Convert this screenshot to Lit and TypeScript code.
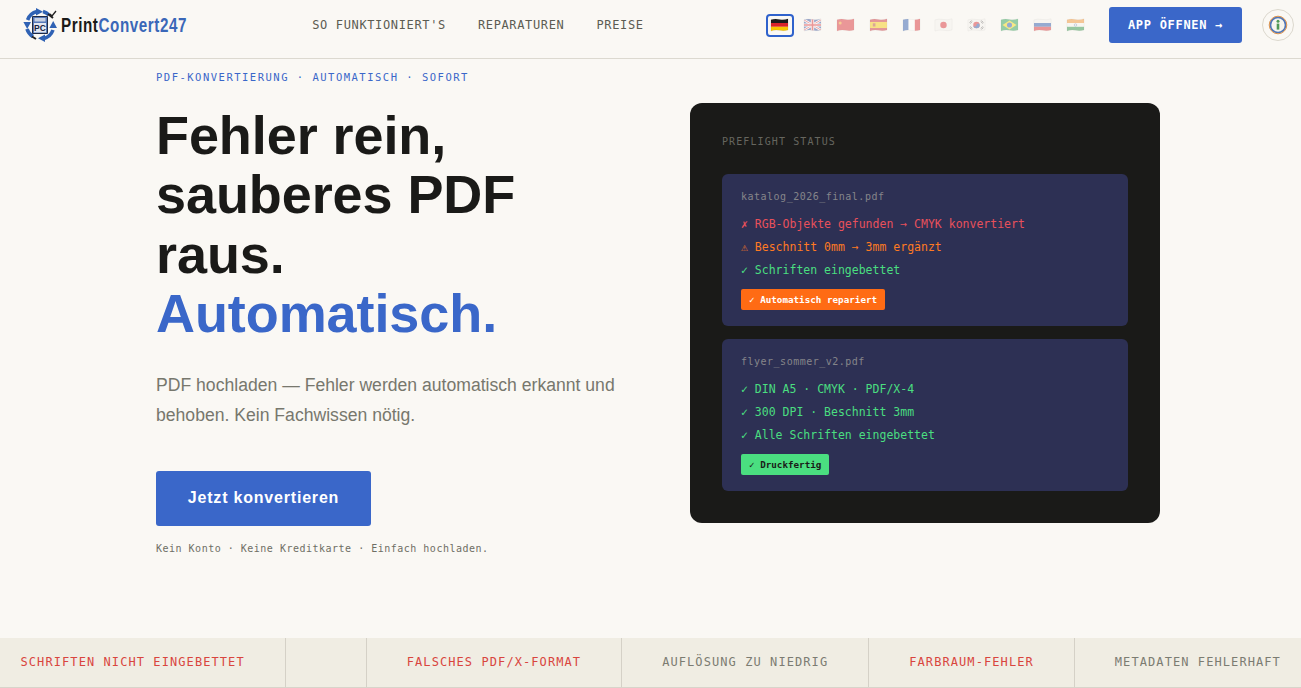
import { LitElement, html, css, svg } from "lit";
import { customElement } from "lit/decorators.js";

const WAVE = "M1 1.6Q5 .2 10 1.2T19 .4V12.2Q15 13.6 10 12.6T1 13.4Z";
const flagArt: Record<string, unknown> = {
  de: svg`<rect width="20" height="4.9" y="0" fill="#1c1c1c"/><rect width="20" height="4" y="4.9" fill="#d8232a"/><rect width="20" height="6" y="8.9" fill="#f7c600"/>`,
  gb: svg`<rect width="20" height="14" fill="#2b4a9b"/><path d="M0 1L20 13M20 1L0 13" stroke="#fff" stroke-width="2.6"/><path d="M0 1L20 13M20 1L0 13" stroke="#d8232a" stroke-width=".9"/><path d="M10 0V14M0 7H20" stroke="#fff" stroke-width="3.4"/><path d="M10 0V14M0 7H20" stroke="#d8232a" stroke-width="1.8"/>`,
  cn: svg`<rect width="20" height="14" fill="#d8232a"/><circle cx="4.4" cy="5" r="1.6" fill="#f09a20"/>`,
  es: svg`<rect width="20" height="14" fill="#c8202a"/><rect width="20" height="6.4" y="3.8" fill="#f7c600"/><rect x="4" y="5.2" width="2.8" height="3.4" fill="#b5452a"/>`,
  fr: svg`<rect width="7" height="14" fill="#1f4fa8"/><rect x="7" width="6.5" height="14" fill="#fff"/><rect x="13.5" width="6.5" height="14" fill="#d8232a"/>`,
  jp: svg`<rect width="20" height="14" fill="#f4f2ee"/><circle cx="10" cy="7" r="3.4" fill="#d8232a"/>`,
  kr: svg`<rect width="20" height="14" fill="#f4f2ee"/><circle cx="10" cy="7" r="3.4" fill="#d8232a"/><path d="M6.6 7a3.4 3.4 0 0 0 6.8 0a1.7 1.7 0 0 0-3.4 0a1.7 1.7 0 0 1-3.4 0Z" fill="#1f4fa8"/><path d="M2.6 4.5L4.8 2.4M3.4 5.4L5.6 3.3M15.2 2.4L17.4 4.5M14.4 3.3L16.6 5.4M2.6 9.5L4.8 11.6M3.4 8.6L5.6 10.7M15.2 11.6L17.4 9.5M14.4 10.7L16.6 8.6" stroke="#222" stroke-width=".7"/>`,
  br: svg`<rect width="20" height="14" fill="#1f9a4a"/><path d="M10 2.2L17.4 7L10 11.8L2.6 7Z" fill="#f7d600"/><circle cx="10" cy="7" r="2.7" fill="#1f4fa8"/>`,
  ru: svg`<rect width="20" height="4.9" fill="#f4f2ee"/><rect y="4.9" width="20" height="4" fill="#1f4fa8"/><rect y="8.9" width="20" height="6" fill="#d8232a"/>`,
  in: svg`<rect width="20" height="4.9" fill="#f08a24"/><rect y="4.9" width="20" height="4" fill="#f6f4ee"/><rect y="8.9" width="20" height="6" fill="#1f8a3a"/><circle cx="10" cy="7" r="1.3" fill="none" stroke="#2b4a9b" stroke-width=".5"/>`,
};

const flag = (code: string) => html`<svg class="flag-svg" viewBox="0 0 20 14" width="19" height="14" aria-hidden="true">
  <defs><clipPath id="wave-${code}"><path d=${WAVE}></path></clipPath></defs>
  <g clip-path="url(#wave-${code})">${flagArt[code]}</g>
  <path d=${WAVE} fill="none" stroke="#000" stroke-opacity=".14" stroke-width=".5"></path>
</svg>`;

const LANGS = ["de", "gb", "cn", "es", "fr", "jp", "kr", "br", "ru", "in"];

const STRIP: [string, boolean][] = [
  ["SCHRIFTEN NICHT EINGEBETTET", true],
  ["", true],
  ["FALSCHES PDF/X-FORMAT", true],
  ["AUFLÖSUNG ZU NIEDRIG", false],
  ["FARBRAUM-FEHLER", true],
  ["METADATEN FEHLERHAFT", false],
];

@customElement("app-root")
export class AppRoot extends LitElement {
  static styles = css`
    :host {
      display: flex;
      flex-direction: column;
      height: 688px;
      overflow: hidden;
      background: #faf8f4;
      color: #1a1a18;
      font-family: "Liberation Sans", Arial, sans-serif;
    }
    .mono { font-family: "DejaVu Sans Mono", "Liberation Mono", monospace; }
    .top {
      flex: none;
      box-sizing: border-box;
      height: 59px;
      display: flex;
      align-items: center;
      justify-content: space-between;
      padding: 0 7px 8px 22px;
      border-bottom: 1px solid #dcd9d0;
    }
    .logo { display: flex; align-items: center; gap: 2px; }
    .wordmark {
      width: 128px;
      transform: scaleX(0.76);
      transform-origin: left center;
      white-space: nowrap;
      font-weight: 700;
      font-size: 20px;
      letter-spacing: 0.75px;
      color: #1a1a18;
    }
    .wordmark span { color: #3a67b8; }
    .nav { display: flex; gap: 32px; }
    .nav span { font-size: 12px; letter-spacing: 0.64px; color: #5c5c52; }
    .right { display: flex; align-items: center; }
    .flags { display: flex; align-items: center; gap: 6.8px; margin-right: 21px; }
    .fl {
      box-sizing: border-box;
      width: 26px;
      height: 21px;
      display: flex;
      align-items: center;
      justify-content: center;
      opacity: 0.45;
      border-radius: 3px;
    }
    .fl.on { opacity: 1; outline: 2px solid #2f62cc; outline-offset: -1px; }
    .flag-svg { display: block; }
    .app {
      box-sizing: border-box;
      width: 133px;
      height: 36px;
      display: flex;
      align-items: center;
      justify-content: center;
      background: #3a67c9;
      color: #fff;
      border-radius: 3px;
      font-size: 12px;
      font-weight: 700;
      letter-spacing: 0.7px;
    }
    .info {
      box-sizing: border-box;
      width: 32px;
      height: 32px;
      margin-left: 20px;
      border-radius: 50%;
      border: 1px solid #dcd8ce;
      display: flex;
      align-items: center;
      justify-content: center;
    }
    .hero {
      flex: 1;
      min-height: 0;
      box-sizing: border-box;
      padding: 12px 141px 0 156px;
      display: flex;
      justify-content: space-between;
      align-items: flex-start;
    }
    .left { width: 500px; }
    .eyebrow { font-size: 10.5px; letter-spacing: 1.5px; line-height: 13px; color: #3a67c9; }
    h1 {
      margin: 22px 0 0;
      font-size: 54px;
      line-height: 59.4px;
      font-weight: 700;
      letter-spacing: -0.08px;
      color: #1a1a18;
    }
    h1 em { font-style: normal; color: #3a67c9; }
    .lead {
      margin: 26px 0 0;
      font-size: 17.6px;
      line-height: 30px;
      color: #77776d;
      width: 480px;
    }
    .cta {
      margin-top: 41px;
      width: 215px;
      height: 55px;
      display: flex;
      align-items: center;
      justify-content: center;
      background: #3a67c9;
      color: #fff;
      border-radius: 3px;
      font-size: 16px;
      font-weight: 700;
      letter-spacing: 0.8px;
    }
    .note { margin-top: 16px; font-size: 10px; line-height: 13px; letter-spacing: 0.5px; color: #6e6e64; }
    .panel {
      margin-top: 32px;
      box-sizing: border-box;
      width: 470px;
      height: 420px;
      padding: 32px;
      background: #1a1a18;
      border-radius: 12px;
    }
    .panel-title { font-size: 10px; line-height: 13px; letter-spacing: 1.1px; color: #66665f; margin-bottom: 26px; }
    .file {
      box-sizing: border-box;
      height: 152px;
      padding: 16px 19px;
      background: #2d3054;
      border-radius: 6px;
    }
    .file + .file { margin-top: 13px; }
    .fname { font-size: 10px; line-height: 14px; letter-spacing: 0.5px; color: #85858a; margin-bottom: 9px; }
    .ln { font-size: 11.5px; line-height: 23px; white-space: nowrap; }
    .red { color: #e8505b; }
    .org { color: #ff7a22; }
    .grn { color: #4ade80; }
    .tag {
      display: inline-block;
      margin-top: 7px;
      padding: 0 8px;
      height: 21px;
      line-height: 21px;
      border-radius: 2px;
      font-size: 9.25px;
      font-weight: 700;
    }
    .tag.o { background: #ff6b14; color: #fff; }
    .tag.g { background: #4ade80; color: #1a1a18; }
    .strip {
      flex: none;
      box-sizing: border-box;
      height: 50px;
      display: flex;
      background: #f0ede3;
      border-bottom: 1px solid #d8d4ca;
      margin-left: -19.5px;
      width: 1360px;
    }
    .cell {
      flex: none;
      display: flex;
      align-items: center;
      padding: 0 40px 2px;
      border-right: 1px solid #d5d1c7;
      font-size: 12px;
      letter-spacing: 1.08px;
      color: #7c7c72;
      white-space: nowrap;
    }
    .cell.bad { color: #d9453e; }
    .cell.empty { width: 80px; padding: 0; box-sizing: content-box; }
  `;

  render() {
    return html`
      <header class="top">
        <div class="logo">
          <svg width="37" height="36" viewBox="0 0 37 36" aria-hidden="true">
            <g fill="none" stroke="#2f62b4" stroke-width="3.6">
              <path d="M5.6 13A13.5 13.5 0 0 1 15 4.6"/>
              <path d="M31 23A13.5 13.5 0 0 1 22 31.4"/>
              <path d="M21 4.6A13.5 13.5 0 0 1 27 8"/>
              <path d="M5 22A13.5 13.5 0 0 0 11 29.6"/>
            </g>
            <g fill="#2f62b4">
              <path d="M14 1L21 4.8L14 8.6Z"/><path d="M23 35L16 31.2L23 27.4Z"/>
              <path d="M1.4 15L5.2 22L9 15Z"/><path d="M35 21L31.2 14L27.4 21Z"/>
            </g>
            <path d="M26 7L31 11" stroke="#222" stroke-width="2" fill="none"/>
            <path d="M10 29.5L14 32" stroke="#222" stroke-width="2" fill="none"/>
            <path d="M28 7l2 2l4-5" stroke="#222" stroke-width="1.3" fill="none"/>
            <path d="M10.5 9.5H25.5V26.5H10.5Z" fill="#5578b8" stroke="#1f2a44"/>
            <rect x="12.5" y="11" width="11" height="3.5" fill="#c7d0e2"/>
            <rect x="12" y="16" width="12" height="9.5" fill="#e4e8f0"/>
            <text x="18" y="24.3" text-anchor="middle" font-family="Liberation Sans" font-weight="700" font-size="8.5" fill="#16233f">PC</text>
          </svg>
          <div class="wordmark">Print<span>Convert247</span></div>
        </div>
        <nav class="nav mono">
          <span>SO FUNKTIONIERT'S</span><span>REPARATUREN</span><span>PREISE</span>
        </nav>
        <div class="right">
          <div class="flags">
            ${LANGS.map((c, i) => html`<div class="fl ${i === 0 ? "on" : ""}">${flag(c)}</div>`)}
          </div>
          <div class="app mono">APP ÖFFNEN →</div>
          <div class="info">
            <svg width="24" height="24" viewBox="0 0 24 24" aria-hidden="true">
              <circle cx="12" cy="12" r="7.6" fill="#f6f5ef" stroke="#4f76b8" stroke-width="1.8"/>
              <circle cx="12" cy="12" r="8.8" fill="none" stroke="#e0944c" stroke-width="1"/>
              <circle cx="12" cy="8.2" r="1.5" fill="#4f9a55"/>
              <rect x="10.7" y="10.6" width="2.6" height="6" fill="#4f9a55"/>
            </svg>
          </div>
        </div>
      </header>
      <main class="hero">
        <section class="left">
          <div class="eyebrow mono">PDF-KONVERTIERUNG · AUTOMATISCH · SOFORT</div>
          <h1>Fehler rein,<br />sauberes PDF<br />raus.<br /><em>Automatisch.</em></h1>
          <p class="lead">PDF hochladen — Fehler werden automatisch erkannt und behoben. Kein Fachwissen nötig.</p>
          <div class="cta">Jetzt konvertieren</div>
          <div class="note mono">Kein Konto · Keine Kreditkarte · Einfach hochladen.</div>
        </section>
        <aside class="panel mono">
          <div class="panel-title">PREFLIGHT STATUS</div>
          <div class="file">
            <div class="fname">katalog_2026_final.pdf</div>
            <div class="ln red">✗ RGB-Objekte gefunden → CMYK konvertiert</div>
            <div class="ln org">⚠ Beschnitt 0mm → 3mm ergänzt</div>
            <div class="ln grn">✓ Schriften eingebettet</div>
            <span class="tag o">✓ Automatisch repariert</span>
          </div>
          <div class="file">
            <div class="fname">flyer_sommer_v2.pdf</div>
            <div class="ln grn">✓ DIN A5 · CMYK · PDF/X-4</div>
            <div class="ln grn">✓ 300 DPI · Beschnitt 3mm</div>
            <div class="ln grn">✓ Alle Schriften eingebettet</div>
            <span class="tag g">✓ Druckfertig</span>
          </div>
        </aside>
      </main>
      <footer class="strip mono">
        ${STRIP.map(([t, bad]) => html`<div class="cell ${bad ? "bad" : ""} ${t ? "" : "empty"}">${t}</div>`)}
      </footer>
    `;
  }
}
